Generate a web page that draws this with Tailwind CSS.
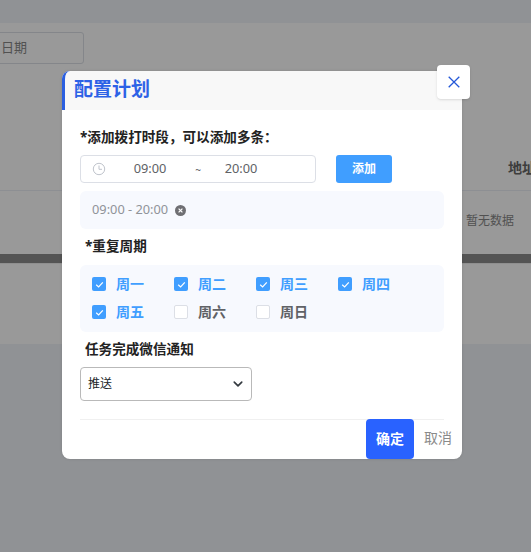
<!doctype html>
<html lang="zh"><head><meta charset="utf-8">
<script src="https://cdn.jsdelivr.net/npm/@tailwindcss/browser@4"></script>
</head>
<body class="bg-[#f0f4f8] font-['Noto_Sans','Noto_Sans_CJK_SC',sans-serif]">
<div class="relative w-[531px] h-[552px] overflow-hidden bg-[#f0f4f8]">
  <!-- page behind -->
  <div class="h-[344px] flex flex-col">
    <div class="h-[23px] bg-[#f0f4f8]"></div>
    <div class="h-[63px] bg-white flex items-start">
      <div class="mt-[9px] ml-[-40px] w-[124px] h-[32px] border border-[#dcdfe6] rounded-[3px] flex items-center justify-end pr-[56px] text-[13px] text-[#888]">日期</div>
    </div>
    <div class="h-[168px] bg-white flex flex-col items-end">
      <div class="h-[105px] w-full border-b border-[#ebeef5] flex items-end justify-end pb-[12px] text-[14px] font-bold text-[#666] whitespace-nowrap"><span class="mr-[-5px]">地址</span></div>
      <div class="w-full pl-[466px] pt-[21px] text-[12px] text-[#888] whitespace-nowrap">暂无数据</div>
    </div>
    <div class="h-[9px] bg-[#8c8c8c]"></div>
    <div class="flex-1 bg-white border-t border-[#eeeeee]"></div>
  </div>
  <!-- overlay -->
  <div class="absolute inset-0 bg-black/40"></div>
  <!-- modal -->
  <div class="absolute left-[62px] top-[71px] w-[400px] h-[388px] bg-white rounded-[8px] flex flex-col shadow-[0_0_3px_rgba(0,0,0,0.12)]">
    <div class="h-[39px] pb-[3px] bg-[#f8f8f8] rounded-t-[8px] border-l-[3px] border-[#2b5fe0] pl-[9px] flex items-center text-[19px] leading-[36px] font-bold text-[#2d62e6] shrink-0">配置计划</div>
    <button class="absolute right-[-8px] top-[-6px] w-[33px] h-[34px] bg-white rounded-[4px] flex items-center justify-center shadow-sm">
      <svg width="12" height="12" viewBox="0 0 12 12" fill="none" stroke="#2458d8" stroke-width="1.3"><path d="M.7.7l10.6 10.6M11.3.7.7 11.3"/></svg>
    </button>
    <div class="flex-1 px-[18px] flex flex-col">
      <div class="mt-[17px] text-[13.6px] leading-[20px] font-bold text-[#222]">*添加拨打时段，可以添加多条：</div>
      <div class="mt-[8px] flex items-center gap-[20px]">
        <div class="w-[236px] h-[28px] border border-[#dcdfe6] rounded-[4px] flex items-center pl-[11px] text-[12.8px] text-[#606266]">
          <svg width="14" height="14" viewBox="0 0 14 14" fill="none" stroke="#c0c4cc" stroke-width="1"><circle cx="7" cy="7" r="5.7"/><path d="M7 3.5V7.3H10"/></svg>
          <span class="ml-[12px] w-[64px] text-center">09:00</span>
          <span class="w-[32px] text-center text-[10px] pt-[2px]">~</span>
          <span class="ml-[-4px] w-[62px] text-center">20:00</span>
        </div>
        <button class="w-[56px] h-[28px] rounded-[3px] bg-[#409eff] text-white text-[12px] font-bold">添加</button>
      </div>
      <div class="mt-[8px] h-[38px] rounded-[6px] bg-[#f7f9fe] flex items-center pl-[12px] text-[12.8px] text-[#909399]">
        <span>09:00 - 20:00</span>
        <svg class="ml-[7px]" width="11" height="11" viewBox="0 0 11 11"><circle cx="5.5" cy="5.5" r="5.5" fill="#6f6f73"/><path d="M3.6 3.6l3.8 3.8M7.4 3.6 3.6 7.4" stroke="#fff" stroke-width="1.2"/></svg>
      </div>
      <div class="mt-[7px] pl-[5px] text-[13.6px] leading-[20px] font-bold text-[#222]">*重复周期</div>
      <div class="mt-[9px] h-[67px] rounded-[6px] bg-[#f7f9fe] pl-[12px] pt-[5px] grid grid-cols-[82px_82px_82px_82px] auto-rows-[28px] text-[14px] font-bold text-[#409eff]">
        <div class="flex items-center gap-[10px]"><span class="w-[14px] h-[14px] rounded-[2px] bg-[#409eff] flex items-center justify-center"><svg width="11" height="11" viewBox="0 0 10 10" fill="none" stroke="#fff" stroke-width="1.1"><path d="M2 5.2 4.2 7.2 8 3"/></svg></span><span class="pb-[2px]">周一</span></div>
        <div class="flex items-center gap-[10px]"><span class="w-[14px] h-[14px] rounded-[2px] bg-[#409eff] flex items-center justify-center"><svg width="11" height="11" viewBox="0 0 10 10" fill="none" stroke="#fff" stroke-width="1.1"><path d="M2 5.2 4.2 7.2 8 3"/></svg></span><span class="pb-[2px]">周二</span></div>
        <div class="flex items-center gap-[10px]"><span class="w-[14px] h-[14px] rounded-[2px] bg-[#409eff] flex items-center justify-center"><svg width="11" height="11" viewBox="0 0 10 10" fill="none" stroke="#fff" stroke-width="1.1"><path d="M2 5.2 4.2 7.2 8 3"/></svg></span><span class="pb-[2px]">周三</span></div>
        <div class="flex items-center gap-[10px]"><span class="w-[14px] h-[14px] rounded-[2px] bg-[#409eff] flex items-center justify-center"><svg width="11" height="11" viewBox="0 0 10 10" fill="none" stroke="#fff" stroke-width="1.1"><path d="M2 5.2 4.2 7.2 8 3"/></svg></span><span class="pb-[2px]">周四</span></div>
        <div class="flex items-center gap-[10px]"><span class="w-[14px] h-[14px] rounded-[2px] bg-[#409eff] flex items-center justify-center"><svg width="11" height="11" viewBox="0 0 10 10" fill="none" stroke="#fff" stroke-width="1.1"><path d="M2 5.2 4.2 7.2 8 3"/></svg></span><span class="pb-[2px]">周五</span></div>
        <div class="flex items-center gap-[10px] text-[#606266]"><span class="w-[14px] h-[14px] rounded-[2px] bg-white border border-[#dcdfe6]"></span><span class="pb-[2px]">周六</span></div>
        <div class="flex items-center gap-[10px] text-[#606266]"><span class="w-[14px] h-[14px] rounded-[2px] bg-white border border-[#dcdfe6]"></span><span class="pb-[2px]">周日</span></div>
      </div>
      <div class="mt-[7px] pl-[5px] text-[13.6px] leading-[20px] font-bold text-[#222]">任务完成微信通知</div>
      <div class="mt-[8px] w-[172px] h-[34px] border border-[#b9b9b9] rounded-[4px] flex items-center justify-between pl-[7px] pr-[8px] text-[12px] text-[#212529]">
        <span>推送</span>
        <svg width="10" height="10" viewBox="0 0 16 16" fill="none" stroke="#343a40" stroke-width="2.6" stroke-linecap="round" stroke-linejoin="round"><path d="m2 5 6 6 6-6"/></svg>
      </div>
      <div class="mt-[18px] border-t border-[#f0f0f0] flex justify-end items-start">
        <button class="w-[48px] h-[40px] mt-[-1px] pb-[2px] rounded-[4px] bg-[#2962ff] text-white text-[14px] font-bold">确定</button>
        <span class="mr-[-8px] w-[38px] h-[35px] flex items-center justify-end text-[14px] text-[#8a8a8a]">取消</span>
      </div>
    </div>
  </div>
</div>
</body></html>
